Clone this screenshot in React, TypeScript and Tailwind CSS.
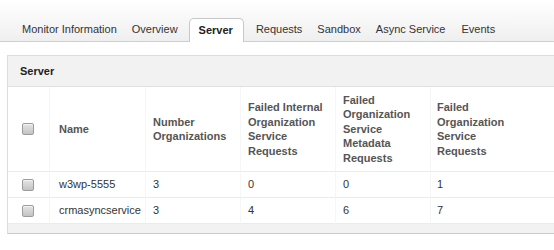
import React from "react";

const tabs = ["Monitor Information", "Overview", "Server", "Requests", "Sandbox", "Async Service", "Events"];

function Check() {
  return (
    <div className="w-[12px] h-[12px] rounded-[2px] border border-[#9c9c9c] bg-gradient-to-b from-[#e4e4e4] to-[#c4c4c4] shadow-[inset_0_1px_0_#f4f4f4]" />
  );
}

const rows = [
  ["w3wp-5555", "3", "0", "0", "1"],
  ["crmasyncservice", "3", "4", "6", "7"],
];

const cell = "flex items-center border-l border-b border-[#f6f6f6] border-b-[#ebebeb]";

export default function App() {
  return (
    <div className="w-[554px] h-[250px] overflow-hidden bg-white text-[11px] text-[#333]" style={{ fontFamily: '"Liberation Sans", Arial, sans-serif' }}>
      <div className="h-[42px] bg-gradient-to-b from-white to-[#efefef] border-b border-[#cfcfcf] flex items-end pl-[15px]">
        {tabs.map((t) => {
          const active = t === "Server";
          if (active)
            return (
              <div key={t} className="ml-[3px] mr-[5px] -mb-px h-[24px] px-[9px] pr-[10px] flex items-center bg-white border border-b-0 border-[#c8c8c8] rounded-t-[5px] font-bold text-[#222]">
                {t}
              </div>
            );
          return (
            <div key={t} className={`h-[24px] px-[7px] flex items-center text-[#333] ${t === "Async Service" || t === "Events" ? "mr-[2px]" : "mr-[1px]"}`}>
              {t}
            </div>
          );
        })}
      </div>
      <div className="mt-[13px] ml-[7px] w-[600px] border border-[#dcdcdc] border-b-[#cccccc]">
        <div className="h-[31px] bg-[#f2f2f2] border-b border-[#e0e0e0] flex items-center pl-[12px] font-bold text-[#222]">Server</div>
        <div className="grid grid-cols-[41px_96px_95px_95px_95px_1fr] leading-[14.5px]">
          <div className="h-[85px] flex items-center pl-[14px] border-b border-[#ebebeb]"><Check /></div>
          <div className={`${cell} pl-[9px] font-bold text-[#555]`}>Name</div>
          <div className={`${cell} pl-[7px] font-bold text-[#555]`}>Number<br />Organizations</div>
          <div className={`${cell} pl-[7px] font-bold text-[#555]`}>Failed Internal<br />Organization<br />Service<br />Requests</div>
          <div className={`${cell} pl-[7px] font-bold text-[#555]`}>Failed<br />Organization<br />Service<br />Metadata<br />Requests</div>
          <div className={`${cell} pl-[6px] font-bold text-[#555]`}>Failed<br />Organization<br />Service<br />Requests</div>
          {rows.map((r, i) => (
            <React.Fragment key={i}>
              <div className="h-[26px] flex items-center pl-[14px] border-b border-[#ebebeb]"><Check /></div>
              <div className={`${cell} pl-[9px]`}>{r[0]}</div>
              <div className={`${cell} pl-[7px]`}>{r[1]}</div>
              <div className={`${cell} pl-[7px]`}>{r[2]}</div>
              <div className={`${cell} pl-[7px]`}>{r[3]}</div>
              <div className={`${cell} pl-[6px]`}>{r[4]}</div>
            </React.Fragment>
          ))}
        </div>
        <div className="h-[9px] bg-[#f2f2f2]" />
      </div>
    </div>
  );
}
